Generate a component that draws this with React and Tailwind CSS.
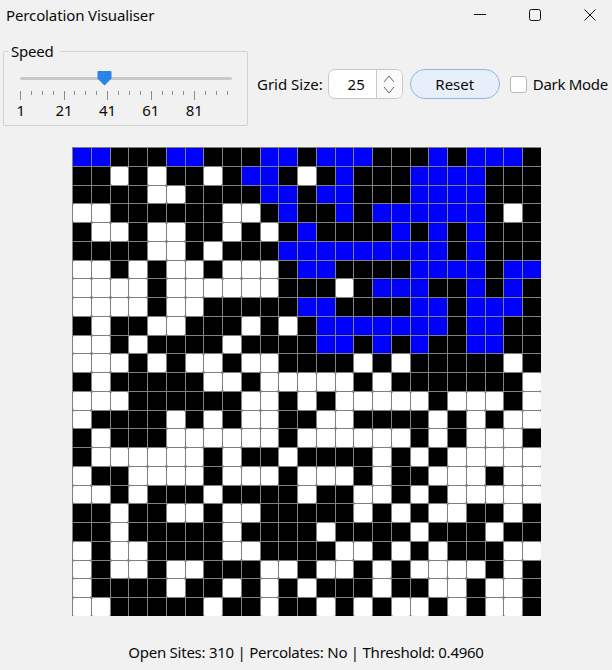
import React from "react";

const ROWS = [
  "BBKKKBBKKKBBKBBBKKKBKBBBK",
  "KKWKWKKWKBBKWKBKKKBBBBKKK",
  "KKKKWWKKKKBBKBBKKKBBBBKKK",
  "WWKKKKKKWWKBKKBKBBBBBBKWK",
  "KWWKWWKKWKWKBKKKKBKBKBKKK",
  "KKKKWWKWKKKBBBBBBBBBKBKKK",
  "WWKWKWWKWWWKBBKKKKBBBBKBB",
  "WWWWKWWWWWWKKKWKBBBKKBKBK",
  "WWWWKWWKKKKKBBKKKKBBKBBBK",
  "KWKKWWKKKWKWKBBBBBBBKBBKK",
  "WWKWKKKKWKKKKBBKBKBKKBBKK",
  "WWWKWKWWKWWKKKKWKWKKKKKWK",
  "KWKKKKKWWKWWWWWKWKKKKKKKW",
  "WWWKKKKKKWWKWKWWWWWKWWWKW",
  "WKKKKWKWKWWKKWWKKKKWKWKWW",
  "KWKKKWWWWWWKWWWWWWKWKWWWK",
  "KWWWWWWKWKKWKKKKWKWKWWWWW",
  "WKKWWWWKWWWKWWWKWKKWWWKWW",
  "WWKWKKKWKKKKWKKWWKWKWWWWW",
  "KKWKKWWKWWKKKKKWKWKWWKKWK",
  "KKWKKKKKWKKKKWKKKKWKKKWKK",
  "WKWWKKKKWWKKKKWWKWKWKKKWW",
  "WKWWKWWKKKWWKWWKWKWWWWKWK",
  "WKKKKWKKWKWKWKKKWKKWWKWWK",
  "WWKKKKKWKKWKKWKWKWWKWKWWK",
];

const font = { fontFamily: '"Noto Sans", "Open Sans", sans-serif' };
const TICKS = Array.from({ length: 20 }, (_, i) => i);

function Cell({ v }) {
  if (v === "K") return <div className="bg-black" />;
  return (
    <div className="bg-black">
      <div className={v === "W" ? "h-full w-full rounded-[1px] bg-white" : "h-full w-full rounded-[1px] bg-[#0000ff]"} />
    </div>
  );
}

export default function App() {
  return (
    <div style={font} className="flex h-[670px] w-[612px] flex-col overflow-hidden bg-[#f1f1f1] text-[15px] leading-[20px] text-[#0a0a0a]">
      <div className="flex h-[31px] items-start justify-between pl-[6px]">
        <span className="mt-[5px] tracking-[-0.12px]">Percolation Visualiser</span>
        <div className="flex items-start">
          <div className="flex h-[30px] w-[44px] items-center justify-center">
            <svg width="12" height="12" viewBox="0 0 12 12"><path d="M0 5.5H12" stroke="#111" fill="none" /></svg>
          </div>
          <div className="flex h-[30px] w-[66px] items-center justify-center">
            <svg width="12" height="12" viewBox="0 0 12 12"><rect x="0.5" y="0.5" width="11" height="11" rx="2" stroke="#111" fill="none" /></svg>
          </div>
          <div className="flex h-[30px] w-[44px] items-center justify-center">
            <svg width="12" height="12" viewBox="0 0 12 12"><path d="M0.5 0.5L11.5 11.5M11.5 0.5L0.5 11.5" stroke="#111" fill="none" /></svg>
          </div>
        </div>
      </div>

      <div className="mt-[10px] flex h-[84px] items-start pl-[3px]">
        <fieldset className="h-[85px] w-[245px] rounded-[2px] border border-[#d2d2d2] pl-[16px]">
          <legend className="-ml-[12px] pl-[3px] pr-[6px] leading-[20px] tracking-[-0.2px]">Speed</legend>
          <div className="relative mt-[16px] h-[3px] w-[212px] rounded-full bg-[#c9c9c9]">
            <svg className="absolute left-[77px] top-[-6px]" width="15" height="15" viewBox="0 0 15 15">
              <path d="M0.5 1Q0.5 0 1.5 0H13.5Q14.5 0 14.5 1V7.5L7.5 14.5L0.5 7.5Z" fill="#2a84e6" />
            </svg>
          </div>
          <div className="mt-[11px] flex h-[9px] w-[208px] items-start justify-between">
            {TICKS.map((i) =>
              i % 4 === 0 ? (
                <div key={i} className="h-[9px] w-px bg-[#8c8c8c]" />
              ) : (
                <div key={i} className="h-[4px] w-px bg-[#8c8c8c]" />
              )
            )}
          </div>
          <div className="-ml-[21px] mt-0 flex">
            {["1", "21", "41", "61", "81"].map((t) => (
              <span key={t} className="w-[43.4px] text-center">{t}</span>
            ))}
          </div>
        </fieldset>

        <div className="ml-[9px] mt-[28px] flex h-[30px] items-center">
          <span>Grid Size:</span>
          <div className="ml-[5px] flex h-[30px] w-[75px] overflow-hidden rounded-[7px] border border-[#c9c9c9] bg-white">
            <span className="flex w-[47px] items-center justify-end pr-[11px]">25</span>
            <div className="flex w-[26px] flex-col items-center justify-center gap-[3px] border-l border-[#c9c9c9] bg-[#fafafa]">
              <svg width="12" height="8" viewBox="0 0 12 8"><path d="M1 7L6 1L11 7" stroke="#666" fill="none" /></svg>
              <svg width="12" height="8" viewBox="0 0 12 8"><path d="M1 1L6 7L11 1" stroke="#666" fill="none" /></svg>
            </div>
          </div>
          <button className="ml-[7px] h-[30px] w-[90px] rounded-full border border-[#8fb7df] bg-[#e7f0fa] text-center">Reset</button>
          <div className="ml-[10px] h-[17px] w-[17px] rounded-[3px] border border-[#b9b9b9] bg-white" />
          <span className="ml-[6px] whitespace-nowrap tracking-[-0.3px]">Dark Mode</span>
        </div>
      </div>

      <div className="ml-[72px] mt-[22px] grid w-fit grid-cols-[repeat(25,17.75px)] grid-rows-[repeat(25,17.75px)] gap-px bg-[#808080] pl-px pt-px">
        {ROWS.map((r, y) => r.split("").map((v, x) => <Cell key={y + "-" + x} v={v} />))}
      </div>

      <div className="mt-[26px] text-center tracking-[-0.25px]">Open Sites: 310 | Percolates: No | Threshold: 0.4960</div>
    </div>
  );
}
